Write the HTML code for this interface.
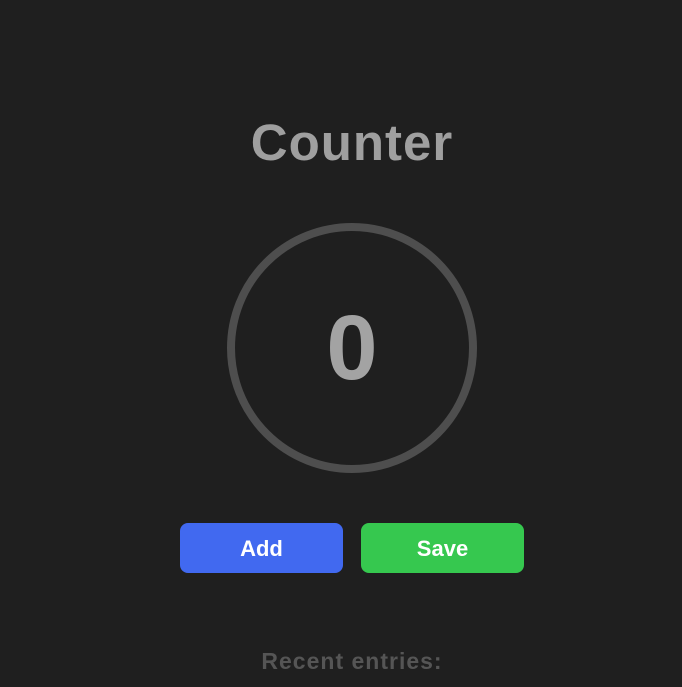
<!DOCTYPE html>
<html><head><style>
html,body{margin:0;padding:0;background:#1f1f1f;width:682px;height:687px;overflow:hidden;font-family:"Liberation Sans",sans-serif;}
.t{position:absolute;left:0;width:704px;text-align:center;top:113px;font-size:51px;font-weight:bold;color:#9f9f9f;line-height:60px;letter-spacing:1px;}
.c{position:absolute;left:227px;top:223px;width:234px;height:234px;border:8px solid #4e4e4e;border-radius:50%;}
.z{position:absolute;left:227px;top:223px;width:250px;height:250px;line-height:250px;text-align:center;font-size:92px;font-weight:bold;color:#a3a3a3;}
.b{position:absolute;top:523px;width:163px;height:50px;border-radius:8px;color:#fff;font-weight:bold;font-size:22px;line-height:52px;text-align:center;}
.r{position:absolute;left:0;width:704px;text-align:center;top:648px;font-size:23px;font-weight:bold;color:#555;letter-spacing:1px;}
</style></head><body>
<div class="t">Counter</div>
<div class="c"></div>
<div class="z">0</div>
<div class="b" style="left:180px;background:#4169f0">Add</div>
<div class="b" style="left:361px;background:#36c84f">Save</div>
<div class="r">Recent entries:</div>
</body></html>
